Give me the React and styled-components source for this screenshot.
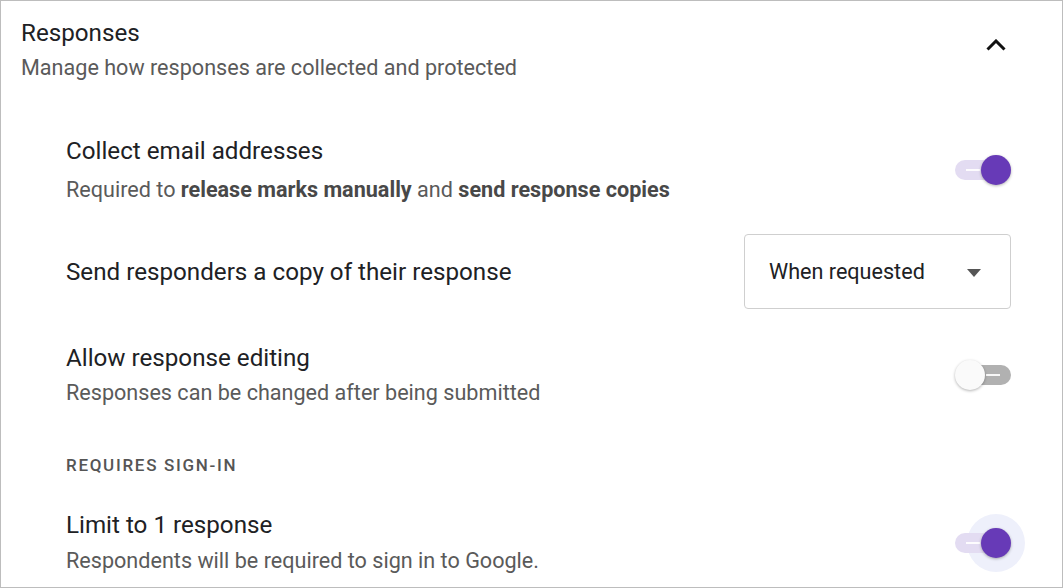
import React from "react";
import styled, { createGlobalStyle } from "styled-components";

const Global = createGlobalStyle`
  html, body { margin: 0; padding: 0; background: #fff; }
  body { font-family: Roboto, "Noto Sans", Arial, sans-serif; }
  * { box-sizing: border-box; }
`;

const Frame = styled.div`
  width: 1063px;
  height: 588px;
  border: 1px solid #bdbdbd;
  overflow: hidden;
  background: #fff;
`;

const Header = styled.div`
  display: flex;
  align-items: flex-start;
  justify-content: space-between;
  padding: 16px 52px 0 20px;
`;

const HeaderText = styled.div`
  display: flex;
  flex-direction: column;
`;

const Title = styled.div`
  font-size: 24.2px;
  line-height: 32px;
  color: #202124;
`;

const Subtitle = styled.div`
  margin-top: 4px;
  font-size: 21.6px;
  line-height: 30px;
  color: #5a5a5a;
`;

const Chevron = styled.svg`
  margin-top: 22px;
  margin-right: 4px;
  display: block;
`;

const Body = styled.div`
  display: flex;
  flex-direction: column;
  padding: 0 51px 0 65px;
`;

const Row = styled.div`
  display: flex;
  align-items: center;
  justify-content: space-between;
  margin-top: ${(p) => p.$top}px;
`;

const RowText = styled.div`
  display: flex;
  flex-direction: column;
`;

const RowTitle = styled.div`
  font-size: 24.2px;
  line-height: 32px;
  color: #202124;
`;

const RowSub = styled.div`
  margin-top: ${(p) => p.$gap}px;
  font-size: 21.6px;
  line-height: 30px;
  color: #5a5a5a;
  b { font-weight: 700; color: #484848; }
`;

const SectionLabel = styled.div`
  margin-top: ${(p) => p.$top}px;
  font-size: 17px;
  line-height: 24px;
  font-weight: 500;
  letter-spacing: 1.7px;
  color: #555;
`;

const Select = styled.div`
  width: 267px;
  height: 75px;
  border: 1px solid #cfcfcf;
  border-radius: 4px;
  display: flex;
  align-items: center;
  justify-content: space-between;
  padding: 0 29px 0 24px;
  font-size: 21.6px;
  color: #202124;
`;

const Caret = styled.span`
  width: 0;
  height: 0;
  border-left: 7.5px solid transparent;
  border-right: 7.5px solid transparent;
  border-top: 8px solid #555;
  margin-top: 2px;
`;

const SwitchWrap = styled.div`
  position: relative;
  width: 56px;
  height: 30px;
  flex: none;
`;

const Track = styled.div`
  position: absolute;
  left: ${(p) => (p.$on ? 0 : 2)}px;
  right: ${(p) => (p.$on ? 3 : 0)}px;
  top: 5px;
  height: 20px;
  border-radius: 10px;
  background: ${(p) => (p.$on ? "#e3dcf2" : "#b1b1b1")};
  &::after {
    content: "";
    position: absolute;
    top: 9px;
    height: 2px;
    width: 14px;
    background: rgba(255, 255, 255, 0.9);
    left: ${(p) => (p.$on ? 11 : 29)}px;
  }
`;

const Halo = styled.div`
  position: absolute;
  width: 58px;
  height: 58px;
  border-radius: 50%;
  background: #eef0fb;
  right: -14px;
  top: -14px;
`;

const Thumb = styled.div`
  position: absolute;
  top: 0;
  ${(p) => (p.$on ? "right: 0;" : "left: 0;")}
  width: 30px;
  height: 30px;
  border-radius: 50%;
  background: ${(p) => (p.$on ? "#673ab7" : "#fafafa")};
  box-shadow: 0 1px 3px rgba(0, 0, 0, 0.3);
`;

function Switch({ on, focused }) {
  return (
    <SwitchWrap>
      {focused && <Halo />}
      <Track $on={on} />
      <Thumb $on={on} />
    </SwitchWrap>
  );
}

export default function App() {
  return (
    <Frame>
      <Global />
      <Header>
        <HeaderText>
          <Title>Responses</Title>
          <Subtitle>Manage how responses are collected and protected</Subtitle>
        </HeaderText>
        <Chevron width="20" height="12" viewBox="0 0 20 12">
          <polyline
            points="1.5,10.5 10,2 18.5,10.5"
            fill="none"
            stroke="#111"
            strokeWidth="3"
          />
        </Chevron>
      </Header>
      <Body>
        <Row $top={52}>
          <RowText>
            <RowTitle>Collect email addresses</RowTitle>
            <RowSub $gap={8}>
              Required to <b>release marks manually</b> and{" "}
              <b>send response copies</b>
            </RowSub>
          </RowText>
          <Switch on />
        </Row>
        <Row $top={29}>
          <RowTitle>Send responders a copy of their response</RowTitle>
          <Select>
            When requested
            <Caret />
          </Select>
        </Row>
        <Row $top={33}>
          <RowText>
            <RowTitle>Allow response editing</RowTitle>
            <RowSub $gap={4}>Responses can be changed after being submitted</RowSub>
          </RowText>
          <Switch on={false} />
        </Row>
        <SectionLabel $top={45}>REQUIRES SIGN-IN</SectionLabel>
        <Row $top={32}>
          <RowText>
            <RowTitle>Limit to 1 response</RowTitle>
            <RowSub $gap={5}>Respondents will be required to sign in to Google.</RowSub>
          </RowText>
          <Switch on focused />
        </Row>
      </Body>
    </Frame>
  );
}
